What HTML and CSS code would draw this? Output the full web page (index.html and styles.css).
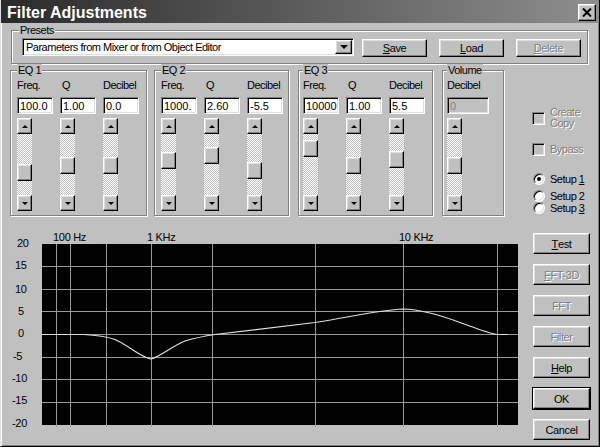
FILE: index.html
```html
<!DOCTYPE html>
<html>
<head>
<meta charset="utf-8">
<title>Filter Adjustments</title>
<link rel="stylesheet" href="styles.css">
</head>
<body>
<div class="window">
  <div class="titlebar">
    <span class="title">Filter Adjustments</span>
    <span class="close"><svg width="10" height="9" viewBox="0 0 10 9"><path d="M1 0.5 L9 8.5 M9 0.5 L1 8.5" stroke="#000" stroke-width="2"/></svg></span>
  </div>
  <div class="content">
    <fieldset class="group presets">
      <legend>Presets</legend>
      <div class="presets-row">
        <div class="combo">
          <span class="combo-text">Parameters from Mixer or from Object Editor</span>
          <span class="combo-btn"><i class="tri tri-down-lg"></i></span>
        </div>
        <button class="btn btn-save"><u>S</u>ave</button>
        <button class="btn btn-load"><u>L</u>oad</button>
        <button class="btn btn-delete is-disabled"><u>D</u>elete</button>
      </div>
    </fieldset>

    <div class="eq-row">
      <fieldset class="group eq eq1">
        <legend>EQ 1</legend>
        <div class="cols">
          <div class="col">
            <div class="lbl">Freq.</div>
            <input class="field" type="text" value="100.0" readonly>
            <div class="vscroll"><div class="arrow"><i class="tri tri-up"></i></div><div class="track"><div class="thumb" style="margin-top:30px"></div></div><div class="arrow"><i class="tri tri-down"></i></div></div>
          </div>
          <div class="col">
            <div class="lbl lbl-q">Q</div>
            <input class="field" type="text" value="1.00" readonly>
            <div class="vscroll"><div class="arrow"><i class="tri tri-up"></i></div><div class="track"><div class="thumb" style="margin-top:23px"></div></div><div class="arrow"><i class="tri tri-down"></i></div></div>
          </div>
          <div class="col">
            <div class="lbl">Decibel</div>
            <input class="field" type="text" value="0.0" readonly>
            <div class="vscroll"><div class="arrow"><i class="tri tri-up"></i></div><div class="track"><div class="thumb" style="margin-top:23px"></div></div><div class="arrow"><i class="tri tri-down"></i></div></div>
          </div>
        </div>
      </fieldset>

      <fieldset class="group eq eq2">
        <legend>EQ 2</legend>
        <div class="cols">
          <div class="col">
            <div class="lbl">Freq.</div>
            <input class="field" type="text" value="1000." readonly>
            <div class="vscroll"><div class="arrow"><i class="tri tri-up"></i></div><div class="track"><div class="thumb" style="margin-top:18px"></div></div><div class="arrow"><i class="tri tri-down"></i></div></div>
          </div>
          <div class="col">
            <div class="lbl lbl-q">Q</div>
            <input class="field" type="text" value="2.60" readonly>
            <div class="vscroll"><div class="arrow"><i class="tri tri-up"></i></div><div class="track"><div class="thumb" style="margin-top:13px"></div></div><div class="arrow"><i class="tri tri-down"></i></div></div>
          </div>
          <div class="col">
            <div class="lbl">Decibel</div>
            <input class="field" type="text" value="-5.5" readonly>
            <div class="vscroll"><div class="arrow"><i class="tri tri-up"></i></div><div class="track"><div class="thumb" style="margin-top:28px"></div></div><div class="arrow"><i class="tri tri-down"></i></div></div>
          </div>
        </div>
      </fieldset>

      <fieldset class="group eq eq3">
        <legend>EQ 3</legend>
        <div class="cols">
          <div class="col">
            <div class="lbl">Freq.</div>
            <input class="field" type="text" value="10000" readonly>
            <div class="vscroll"><div class="arrow"><i class="tri tri-up"></i></div><div class="track"><div class="thumb" style="margin-top:6px"></div></div><div class="arrow"><i class="tri tri-down"></i></div></div>
          </div>
          <div class="col">
            <div class="lbl lbl-q">Q</div>
            <input class="field" type="text" value="1.00" readonly>
            <div class="vscroll"><div class="arrow"><i class="tri tri-up"></i></div><div class="track"><div class="thumb" style="margin-top:23px"></div></div><div class="arrow"><i class="tri tri-down"></i></div></div>
          </div>
          <div class="col">
            <div class="lbl">Decibel</div>
            <input class="field" type="text" value="5.5" readonly>
            <div class="vscroll"><div class="arrow"><i class="tri tri-up"></i></div><div class="track"><div class="thumb" style="margin-top:17px"></div></div><div class="arrow"><i class="tri tri-down"></i></div></div>
          </div>
        </div>
      </fieldset>

      <fieldset class="group eq vol">
        <legend>Volume</legend>
        <div class="cols">
          <div class="col">
            <div class="lbl">Decibel</div>
            <input class="field field-disabled" type="text" value="0" readonly>
            <div class="vscroll"><div class="arrow"><i class="tri tri-up"></i></div><div class="track"><div class="thumb" style="margin-top:23px"></div></div><div class="arrow"><i class="tri tri-down"></i></div></div>
          </div>
        </div>
      </fieldset>

      <div class="opts">
        <div class="check-row">
          <span class="checkbox"></span>
          <span class="is-disabled-text">Create<br>Copy</span>
        </div>
        <div class="check-row bypass">
          <span class="checkbox"></span>
          <span class="is-disabled-text">Bypass</span>
        </div>
        <div class="radio-row setup1">
          <span class="radio is-checked"></span>
          <span>Setup <u>1</u></span>
        </div>
        <div class="radio-row setup2">
          <span class="radio"></span>
          <span>Setup 2</span>
        </div>
        <div class="radio-row">
          <span class="radio"></span>
          <span>Setup <u>3</u></span>
        </div>
      </div>
    </div>

    <div class="chart-row">
      <svg class="chart" width="519" height="213" viewBox="1 228 519 213">
        <rect x="42" y="244" width="476" height="181" fill="#000"/>
        <g stroke="#9a9a9a" stroke-width="1">
          <path d="M56.5 244 V427 M70.5 244 V427 M106.5 244 V427 M151.5 244 V427 M212.5 244 V427 M315.5 244 V427 M403.5 244 V427 M497.5 244 V427"/>
          <path d="M42 266.5 H518 M42 289.5 H518 M42 311.5 H518 M42 334.5 H518 M42 357.5 H518 M42 379.5 H518 M42 402.5 H518"/>
        </g>
        <path d="M42 334.5 L84 334.5 C95 335 105 336 115 339.5 C128 345 140 357 151 359 C160 357 172 346 185 341 C195 338 205 336 215 334.5 L315 322.5 C350 317 380 310 403 309 C420 309.5 440 315 460 322.5 C478 329 488 333 497 334.5 L508 334.5" fill="none" stroke="#e0e0e0" stroke-width="1.2"/>
        <g class="axis">
          <text x="53" y="241">100 Hz</text>
          <text x="147" y="241">1 KHz</text>
          <text x="399" y="241">10 KHz</text>
          <text x="17" y="247">20</text>
          <text x="15" y="269">15</text>
          <text x="15" y="293">10</text>
          <text x="18" y="315">5</text>
          <text x="18" y="337">0</text>
          <text x="13" y="360">-5</text>
          <text x="12" y="382">-10</text>
          <text x="12" y="404">-15</text>
          <text x="12" y="427">-20</text>
        </g>
      </svg>
      <div class="btn-col">
        <button class="btn"><u>T</u>est</button>
        <button class="btn is-disabled"><u>F</u>FT-3D</button>
        <button class="btn is-disabled">FFT</button>
        <button class="btn is-disabled">Filter</button>
        <button class="btn"><u>H</u>elp</button>
        <button class="btn is-default">OK</button>
        <button class="btn">Cancel</button>
      </div>
    </div>
  </div>
</div>
</body>
</html>
```

FILE: styles.css
```css
* { box-sizing: border-box; }

body {
  margin: 0;
  font-family: "Liberation Sans", Arial, sans-serif;
  font-size: 11px;
  letter-spacing: -0.5px;
  color: #000;
  background: #c0c0c0;
}

.window {
  width: 600px;
  height: 447px;
  background: #c0c0c0;
  display: flex;
  flex-direction: column;
  border-left: 1px solid #dfdfdf;
  border-right: 1px solid #000;
  border-bottom: 1px solid #000;
  box-shadow: inset 1px 0 #fff, inset -1px -1px #808080;
  overflow: hidden;
}

/* ---------- title bar ---------- */
.titlebar {
  flex: none;
  height: 23px;
  display: flex;
  align-items: flex-start;
  padding-left: 6px;
  background: linear-gradient(to right, #2a2a2a, #8e8e8e);
  color: #fff;
}
.title {
  margin-top: 4px;
  font: bold 16px/18px "Liberation Sans", Arial, sans-serif;
  letter-spacing: 0;
}
.close {
  margin: 4px 3px 0 auto;
  width: 18px;
  height: 17px;
  display: flex;
  align-items: center;
  justify-content: center;
  background: #c0c0c0;
  border: 1px solid;
  border-color: #fff #000 #000 #fff;
  box-shadow: inset -1px -1px #808080, inset 1px 1px #dfdfdf;
}

/* ---------- shared bevels ---------- */
.btn, .arrow, .thumb, .combo-btn {
  background: #c0c0c0;
  border: 1px solid;
  border-color: #fff #000 #000 #fff;
  box-shadow: inset -1px -1px #808080, inset 1px 1px #dfdfdf;
}

.btn {
  font: 11px "Liberation Sans", Arial, sans-serif;
  letter-spacing: -0.4px;
  color: #000;
  padding: 0;
  margin: 0;
  display: flex;
  align-items: center;
  justify-content: center;
}
.btn.is-disabled {
  color: #808080;
  text-shadow: 1px 1px #fff;
}
.btn.is-default {
  outline: 1px solid #000;
}

.content {
  flex: 1;
  padding-top: 1px;
  display: flex;
  flex-direction: column;
}

/* ---------- group boxes ---------- */
.group {
  margin: 0;
  padding: 0;
  min-width: 0;
  border: 1px solid #808080;
  box-shadow: inset 1px 1px #fff, 1px 1px #fff;
}
.group legend {
  padding: 0 1px;
  line-height: 13px;
  background: #c0c0c0;
}

.presets {
  height: 40px;
  margin: 0 11px 0 10px;
  padding: 1px 5px 6px 10px;
}
.presets legend { margin-left: -3px; }

.presets-row {
  display: flex;
  align-items: flex-start;
}
.combo {
  width: 332px;
  height: 18px;
  display: flex;
  align-items: center;
  background: #fff;
  border: 1px solid;
  border-color: #808080 #fff #fff #808080;
  box-shadow: inset 1px 1px #000, inset -1px -1px #dfdfdf;
  padding: 0 1px 0 3px;
}
.combo-text {
  flex: 1;
  font-size: 11px;
  letter-spacing: -0.5px;
}
.combo-btn {
  width: 17px;
  height: 14px;
  display: flex;
  align-items: center;
  justify-content: center;
}
.presets-row .btn {
  width: 65px;
  height: 18px;
  margin-top: 1px;
}
.btn-save { margin-left: 8px; }
.btn-load, .btn-delete { margin-left: 12px; }

/* ---------- EQ groups ---------- */
.eq-row {
  display: flex;
  margin-left: 9px;
}
.eq {
  height: 152px;
  padding: 2px 0 4px 6px;
}
.eq1 { width: 137px; }
.eq2 { width: 135px; margin-left: 7px; }
.eq3 { width: 135px; margin-left: 9px; padding-left: 4px; }
.vol { width: 62px; margin-left: 9px; padding-left: 4px; }

.cols {
  display: grid;
  grid-template-columns: repeat(3, 36px);
  column-gap: 7px;
}
.vol .cols { grid-template-columns: 42px; }

.lbl {
  height: 13px;
  line-height: 13px;
}
.lbl-q { padding-left: 2px; }

.field {
  display: block;
  width: 100%;
  height: 17px;
  margin: 5px 0 0;
  padding: 0 0 0 2px;
  font: 11px "Liberation Sans", Arial, sans-serif;
  letter-spacing: 0;
  color: #000;
  background: #fff;
  border: 1px solid;
  border-color: #808080 #fff #fff #808080;
  box-shadow: inset 1px 1px #000, inset -1px -1px #dfdfdf;
  outline: none;
}
.field-disabled {
  background: #c0c0c0;
  color: #808080;
}

.vscroll {
  width: 15px;
  height: 93px;
  margin-top: 4px;
  display: flex;
  flex-direction: column;
}
.arrow {
  flex: none;
  height: 16px;
  display: flex;
  align-items: center;
  justify-content: center;
}
.track {
  flex: 1;
  background-color: #c0c0c0;
  background-image: conic-gradient(#fff 25%, #c0c0c0 0 50%, #fff 0 75%, #c0c0c0 0);
  background-size: 2px 2px;
}
.thumb {
  height: 17px;
}

.tri {
  display: block;
  width: 0;
  height: 0;
  border-left: 3px solid transparent;
  border-right: 3px solid transparent;
}
.tri-up { border-bottom: 3px solid #000; }
.tri-down { border-top: 3px solid #000; }
.tri-down-lg {
  border-left-width: 4px;
  border-right-width: 4px;
  border-top: 4px solid #000;
}

/* ---------- options column ---------- */
.opts {
  margin-left: 28px;
  padding-top: 43px;
  display: flex;
  flex-direction: column;
}
.check-row {
  display: flex;
  align-items: center;
  gap: 5px;
  line-height: 11px;
}
.bypass { margin-top: 14px; }
.checkbox {
  flex: none;
  width: 13px;
  height: 13px;
  background: #c0c0c0;
  border: 1px solid;
  border-color: #808080 #fff #fff #808080;
  box-shadow: inset 1px 1px #000, inset -1px -1px #dfdfdf;
}
.is-disabled-text {
  color: #808080;
  text-shadow: 1px 1px #fff;
}
.radio-row {
  height: 12px;
  display: flex;
  align-items: center;
  gap: 5px;
  line-height: 12px;
  padding-left: 1px;
}
.setup1 { margin-top: 17px; }
.setup2 { margin-top: 5px; }
.radio {
  flex: none;
  width: 12px;
  height: 12px;
  border-radius: 50%;
  background: #fff;
  border: 1px solid;
  border-color: #808080 #fff #fff #808080;
  box-shadow: inset 1px 1px #000, inset -1px -1px #dfdfdf;
  display: flex;
  align-items: center;
  justify-content: center;
}
.radio.is-checked::after {
  content: "";
  width: 4px;
  height: 4px;
  border-radius: 50%;
  background: #000;
}

/* ---------- chart ---------- */
.chart-row {
  display: flex;
  margin-top: 12px;
  height: 213px;
}
.chart {
  flex: none;
  display: block;
}
.axis text {
  font-family: "Liberation Sans", Arial, sans-serif;
  font-size: 11px;
  letter-spacing: -0.3px;
  fill: #000;
}
.btn-col {
  margin: 0 9px 0 auto;
  padding-top: 5px;
  width: 57px;
  display: flex;
  flex-direction: column;
  gap: 10px;
}
.btn-col .btn {
  width: 57px;
  height: 21px;
  flex: none;
}
```
